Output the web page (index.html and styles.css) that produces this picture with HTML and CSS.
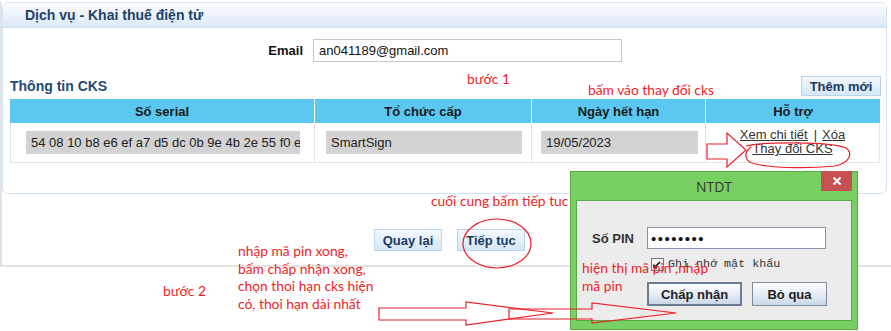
FILE: index.html
```html
<!DOCTYPE html>
<html lang="vi">
<head>
<meta charset="utf-8">
<title>Dịch vụ - Khai thuế điện tử</title>
<link rel="stylesheet" href="styles.css">
</head>
<body>
<div class="frame">
  <div class="panel">
    <div class="panel-head">Dịch vụ - Khai thuế điện tử</div>
    <div class="panel-body">
      <div class="email-row">
        <span class="email-label">Email</span>
        <div class="email-input">an041189@gmail.com</div>
      </div>
      <div class="cks-bar">
        <span class="cks-title">Thông tin CKS</span>
        <button class="btn btn-add">Thêm mới</button>
      </div>
      <div class="grid">
        <div class="th">Số serial</div>
        <div class="th">Tổ chức cấp</div>
        <div class="th">Ngày hết hạn</div>
        <div class="th th-last">Hỗ trợ</div>
        <div class="td td-first"><div class="box box-serial">54 08 10 b8 e6 ef a7 d5 dc 0b 9e 4b 2e 55 f0 e6 7c</div></div>
        <div class="td"><div class="box box-org">SmartSign</div></div>
        <div class="td"><div class="box box-date">19/05/2023</div></div>
        <div class="td td-support">
          <div class="links"><a class="lnk">Xem chi tiết</a><span class="sep">|</span><a class="lnk">Xóa</a></div>
          <div class="links"><a class="lnk">Thay đổi CKS</a></div>
        </div>
      </div>
    </div>
  </div>
  <div class="actions">
    <button class="btn btn-act">Quay lại</button>
    <button class="btn btn-act">Tiếp tục</button>
  </div>
</div>

<div class="dialog">
  <div class="dlg-title">NTDT</div>
  <div class="dlg-close">
    <svg width="10" height="10" viewBox="0 0 10 10"><path d="M1.5 1.5L8.5 8.5M8.5 1.5L1.5 8.5" stroke="#fff" stroke-width="2"/></svg>
  </div>
  <div class="dlg-body">
    <div class="pin-row">
      <span class="pin-label">Số PIN</span>
      <div class="pin-input">••••••••</div>
    </div>
    <div class="chk-row">
      <svg class="chk" width="13" height="13" viewBox="0 0 13 13"><rect x="0.5" y="0.5" width="12" height="12" fill="#f4f4f4" stroke="#7a7a7a"/><path d="M3 10L9 4M3 10L3 6.5M3 10L6 10" stroke="#111" stroke-width="1.6" fill="none"/></svg>
      <span class="chk-label">Ghi nhớ mật khẩu</span>
    </div>
    <div class="dlg-btns">
      <button class="dbtn dbtn-ok">Chấp nhận</button>
      <button class="dbtn dbtn-cancel">Bỏ qua</button>
    </div>
  </div>
</div>

<svg class="marks" width="891" height="331" viewBox="0 0 891 331">
  <g fill="none" stroke="#e8202a" stroke-width="1.2">
    <path d="M707 144L727 144L727 133L746 150L727 167L727 159L707 159Z"/>
    <path d="M746 146C760 142 830 141 846 148C853 153 850 163 835 166C805 169 768 168 752 163C744 160 744 152 751 147"/>
    <ellipse cx="497" cy="243.5" rx="34" ry="24.5"/>
    <path d="M379 308L466 308L466 302L553 313L466 325L466 320L379 320Z"/>
    <path d="M509 309L592 309L592 303L676 313L592 323L592 319L509 319Z"/>
  </g>
</svg>

<div class="note note-b1">bước 1</div>
<div class="note note-thay">bấm váo thay đổi cks</div>
<div class="note note-cuoi">cuối cung bấm tiếp tuc</div>
<div class="note note-steps">nhập mã pin xong,<br>bấm chấp nhận xong,<br>chọn thoi hạn cks hiện<br>có, thoi hạn dài nhất</div>
<div class="note note-b2">bước 2</div>
<div class="note note-pin">hiện thị mã pin ,nhập<br>mã pin</div>
</body>
</html>
```
FILE: styles.css
```css
* { box-sizing: border-box; margin: 0; padding: 0; }

body {
  margin: 0;
  width: 891px;
  height: 331px;
  overflow: hidden;
  position: relative;
  background: #fff;
  font-family: "Liberation Sans", Arial, sans-serif;
  font-size: 13px;
  color: #222;
}

.frame {
  height: 265px;
  border-left: 2px solid #e3e3e3;
  border-bottom: 2px solid #e3e3e3;
}

.panel {
  margin: 2px 4px 0 0;
  height: 192px;
  border: 1px solid #d3e4f5;
  border-radius: 6px;
}

.panel-head {
  height: 25px;
  border-bottom: 1px solid #cfe1f3;
  border-radius: 5px 5px 0 0;
  background: linear-gradient(#fdfeff, #dae8f6);
  padding-left: 22px;
  display: flex;
  align-items: center;
  font-weight: bold;
  font-size: 14px;
  color: #1d4269;
}

.panel-body { padding: 11px 5px 0 7px; }

.email-row { display: flex; align-items: center; gap: 10px; }
.email-label { width: 293px; text-align: right; font-weight: bold; color: #111; }
.email-input {
  width: 309px;
  height: 23px;
  border: 1px solid #c8c8c8;
  padding-left: 5px;
  display: flex;
  align-items: center;
  color: #111;
}

.cks-bar {
  margin-top: 14px;
  height: 20px;
  display: flex;
  justify-content: space-between;
  align-items: center;
}
.cks-title { font-weight: bold; font-size: 14px; color: #1f4a75; }

.btn {
  height: 22px;
  border: 1px solid #b8d5f0;
  background: linear-gradient(#f3f8fe, #d5e7f8);
  font: bold 13px "Liberation Sans", Arial, sans-serif;
  color: #1c3a5e;
  display: flex;
  align-items: center;
  justify-content: center;
}
.btn-add { width: 80px; height: 20px; }

.grid {
  margin-top: 3px;
  display: grid;
  grid-template-columns: 305px 217px 174px 174px;
}
.th {
  height: 24px;
  background: #5bc8f2;
  border-right: 1px solid #fff;
  font-weight: bold;
  color: #1a1a1a;
  display: flex;
  align-items: center;
  justify-content: center;
}
.th-last { border-right: none; }

.td {
  height: 40px;
  border-right: 1px solid #e4e4e4;
  border-bottom: 1px solid #e4e4e4;
  display: flex;
  align-items: center;
}
.td-first { border-left: 1px solid #e4e4e4; }

.box {
  height: 23px;
  background: #d3d3d3;
  padding-left: 5px;
  display: flex;
  align-items: center;
  white-space: nowrap;
  overflow: hidden;
  color: #222;
}
.box-serial { margin-left: 15px; width: 274px; }
.box-org { margin-left: 11px; width: 196px; }
.box-date { margin-left: 9px; width: 157px; }

.td-support {
  flex-direction: column;
  justify-content: center;
  padding-bottom: 1px;
}
.links { line-height: 14px; display: flex; justify-content: center; color: #333; }
.lnk { text-decoration: underline; color: #333; }
.sep { margin: 0 5px 0 6px; }

.actions {
  margin-top: 35px;
  padding-left: 6px;
  display: flex;
  justify-content: center;
  gap: 15px;
}
.btn-act { width: 68px; }

/* dialog */
.dialog {
  position: absolute;
  left: 570px;
  top: 171px;
  width: 288px;
  height: 159px;
  background: #79d062;
  border: 1px solid #5ca94a;
  padding: 0 5px 8px;
  display: flex;
  flex-direction: column;
}
.dlg-title {
  height: 28px;
  display: flex;
  align-items: center;
  justify-content: center;
  font-family: "Open Sans", "DejaVu Sans", sans-serif;
  font-size: 14px;
  color: #333;
}
.dlg-close {
  position: absolute;
  top: -1px;
  right: 5px;
  width: 31px;
  height: 20px;
  background: #c75050;
  display: flex;
  align-items: center;
  justify-content: center;
}
.dlg-body {
  flex: 1;
  background: #ececec;
  border: 1px solid #5ca94a;
  padding: 26px 0 0 15px;
}
.pin-row { display: flex; align-items: center; }
.pin-label { width: 55px; font-weight: bold; color: #333; }
.pin-input {
  width: 179px;
  height: 22px;
  background: #fff;
  border: 1px solid #8696a6;
  padding-left: 3px;
  display: flex;
  align-items: center;
  font-size: 15px;
  letter-spacing: 1.5px;
  color: #111;
}
.chk-row {
  margin-top: 8px;
  padding-left: 59px;
  display: flex;
  align-items: center;
  gap: 4px;
}
.chk-label {
  font-family: "Liberation Mono", "DejaVu Sans Mono", monospace;
  font-size: 11.7px;
  color: #333;
}
.dlg-btns {
  margin-top: 11px;
  padding-left: 55px;
  display: flex;
  gap: 10px;
}
.dbtn {
  height: 24px;
  background: linear-gradient(#fdfeff, #e6edf5 50%, #c9d8e8);
  font: bold 13px "Liberation Sans", Arial, sans-serif;
  color: #222;
}
.dbtn-ok { width: 95px; border: 2px solid #6a7c8e; }
.dbtn-cancel { width: 75px; border: 1px solid #7d8ea0; }

/* annotations */
.marks { position: absolute; left: 0; top: 0; }
.note {
  position: absolute;
  font-family: Lato, "Open Sans", sans-serif;
  font-size: 13.8px;
  line-height: 18px;
  color: #ec1f28;
  white-space: nowrap;
}
.note-b1 { left: 467px; top: 70px; }
.note-thay { left: 588px; top: 81px; }
.note-cuoi { left: 431px; top: 192px; }
.note-steps { left: 238px; top: 242px; line-height: 17.7px; }
.note-b2 { left: 163px; top: 282px; }
.note-pin { left: 582px; top: 259px; }
```
